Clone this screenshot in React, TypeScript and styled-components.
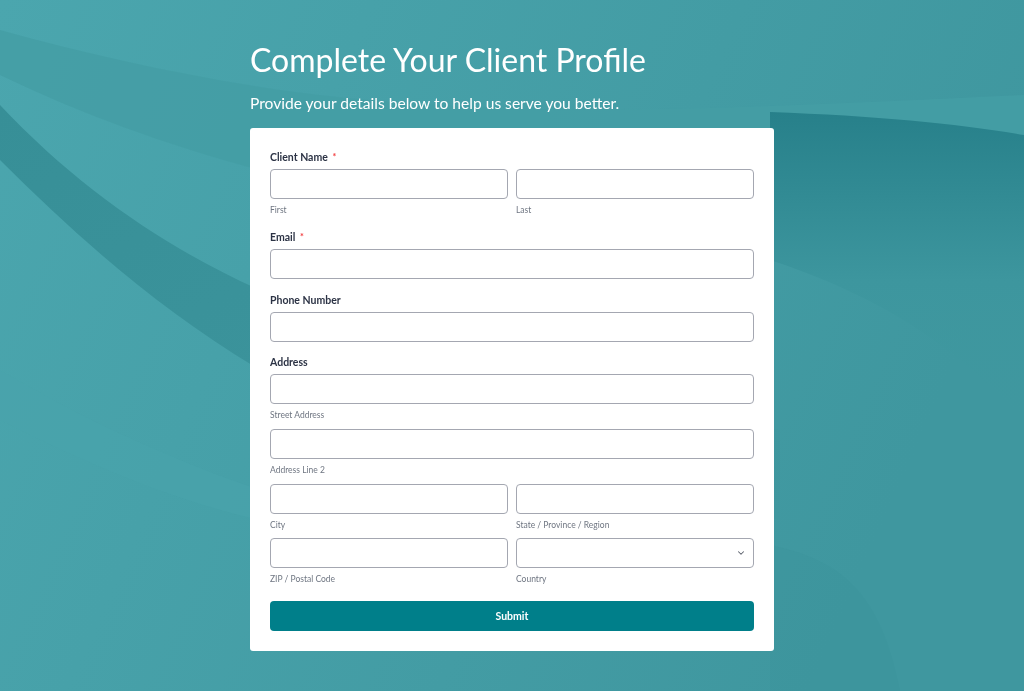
import React from 'react';
import styled, { createGlobalStyle } from 'styled-components';
import { ChevronDown } from 'lucide-react';

const GlobalStyle = createGlobalStyle`
  * { box-sizing: border-box; }
  html, body { margin: 0; padding: 0; }
  body {
    font-family: Lato, "Open Sans", sans-serif;
    background: #46a0a8;
    min-height: 691px;
  }
`;

const Backdrop: React.FC = () => (
  <BackdropSvg viewBox="0 0 1024 691" preserveAspectRatio="none">
    <defs>
      <linearGradient id="base" x1="0" y1="0" x2="1" y2="0.3">
        <stop offset="0" stopColor="#4ba6ae" />
        <stop offset="1" stopColor="#3f979f" />
      </linearGradient>
      <linearGradient id="rightDark" x1="0" y1="0" x2="0" y2="1">
        <stop offset="0" stopColor="#27808a" />
        <stop offset="0.55" stopColor="#3d969e" />
        <stop offset="1" stopColor="#3f989f" stopOpacity="0" />
      </linearGradient>
      <linearGradient id="swoosh" x1="0" y1="0" x2="1" y2="1">
        <stop offset="0" stopColor="#378f97" />
        <stop offset="1" stopColor="#3f979f" />
      </linearGradient>
    </defs>
    <rect width="1024" height="691" fill="url(#base)" />
    <path d="M0 30 C 90 55 180 75 280 90 C 500 120 700 110 1024 95 L1024 260 C 700 260 300 220 0 75 Z" fill="#449da5" opacity="0.85" />
    <path d="M0 105 C 80 190 170 250 260 290 C 420 360 600 410 780 430 L780 520 C 560 480 400 440 260 370 C 160 310 80 240 0 160 Z" fill="url(#swoosh)" />
    <path d="M770 112 C 880 116 960 124 1024 135 L1024 420 C 940 330 860 290 770 260 Z" fill="url(#rightDark)" />
    <path d="M0 370 C 100 430 200 470 260 490 L260 520 C 170 500 80 460 0 420 Z" fill="#4aa4ac" opacity="0.6" />
    <path d="M770 545 C 840 560 880 590 900 691 L770 691 Z" fill="#3b939b" opacity="0.5" />
  </BackdropSvg>
);

const App: React.FC = () => {
  return (
    <>
      <GlobalStyle />
      <Backdrop />
      <Page>
        <Title>Complete Your Client Profile</Title>
        <Subtitle>Provide your details below to help us serve you better.</Subtitle>
        <Card>
          <Field $gap={11}>
            <Label>Client Name <Req>*</Req></Label>
            <Row>
              <div>
                <Input />
                <Sub>First</Sub>
              </div>
              <div>
                <Input />
                <Sub>Last</Sub>
              </div>
            </Row>
          </Field>

          <Field $gap={12}>
            <Label>Email <Req>*</Req></Label>
            <Input type="email" />
          </Field>

          <Field $gap={11}>
            <Label>Phone Number</Label>
            <Input type="tel" />
          </Field>

          <Field $gap={0}>
            <Label>Address</Label>
            <AddrLine>
              <Input />
              <Sub>Street Address</Sub>
            </AddrLine>
            <AddrLine>
              <Input />
              <Sub>Address Line 2</Sub>
            </AddrLine>
            <AddrRow>
              <div>
                <Input />
                <Sub>City</Sub>
              </div>
              <div>
                <Input />
                <Sub>State / Province / Region</Sub>
              </div>
            </AddrRow>
            <Row>
              <div>
                <Input />
                <Sub>ZIP / Postal Code</Sub>
              </div>
              <div>
                <SelectWrap>
                  <Select defaultValue="">
                    <option value=""></option>
                  </Select>
                  <Chevron size={10} strokeWidth={2.5} />
                </SelectWrap>
                <Sub>Country</Sub>
              </div>
            </Row>
          </Field>

          <SubmitButton type="button">Submit</SubmitButton>
        </Card>
      </Page>
    </>
  );
};

const BackdropSvg = styled.svg`
  position: fixed;
  inset: 0;
  width: 100%;
  height: 100%;
  z-index: 0;
  display: block;
`;

const Page = styled.main`
  position: relative;
  z-index: 1;
  width: 524px;
  margin: 0 auto;
  padding-top: 43px;
  padding-bottom: 40px;
`;

const Title = styled.h1`
  margin: 0;
  font-weight: 400;
  font-size: 32px;
  line-height: 34px;
  color: #ffffff;
`;

const Subtitle = styled.p`
  margin: 16px 0 15px;
  font-size: 15.6px;
  line-height: 20px;
  color: #ffffff;
  font-weight: 400;
`;

const Card = styled.form`
  background: #ffffff;
  border-radius: 3px;
  padding: 20px;
`;

const Field = styled.div<{ $gap: number }>`
  margin-bottom: ${p => p.$gap}px;
`;

const Label = styled.div`
  padding-top: 1px;
  font-size: 10.5px;
  font-weight: 700;
  line-height: 16px;
  color: #2c3345;
  margin-bottom: 4px;
`;

const Req = styled.span`
  color: #f23a3c;
  font-size: 9px;
  margin-left: 2px;
  vertical-align: 1px;
`;

const Row = styled.div`
  display: grid;
  grid-template-columns: 1fr 1fr;
  gap: 8px;
`;

const AddrRow = styled(Row)`
  margin-bottom: 6px;
`;

const AddrLine = styled.div`
  margin-bottom: 7px;
`;

const Input = styled.input`
  display: block;
  width: 100%;
  height: 30px;
  border: 1px solid #a4a7b1;
  border-radius: 4px;
  background: #ffffff;
  padding: 0 10px;
  font-family: inherit;
  font-size: 12px;
  outline: none;
`;

const Sub = styled.div`
  margin-top: 5px;
  font-size: 8.5px;
  line-height: 13px;
  color: #6f7682;
`;

const SelectWrap = styled.div`
  position: relative;
`;

const Select = styled.select`
  display: block;
  width: 100%;
  height: 30px;
  border: 1px solid #a4a7b1;
  border-radius: 4px;
  background: #ffffff;
  appearance: none;
  -webkit-appearance: none;
  padding: 0 10px;
  font-family: inherit;
  outline: none;
`;

const Chevron = styled(ChevronDown)`
  position: absolute;
  right: 8px;
  top: 10px;
  color: #5a5f6b;
  pointer-events: none;
`;

const SubmitButton = styled.button`
  display: block;
  width: 100%;
  height: 30px;
  margin-top: 15px;
  border: none;
  border-radius: 4px;
  background: #007f8a;
  color: #ffffff;
  font-family: inherit;
  font-size: 10.5px;
  font-weight: 700;
  cursor: pointer;
`;

export default App;
